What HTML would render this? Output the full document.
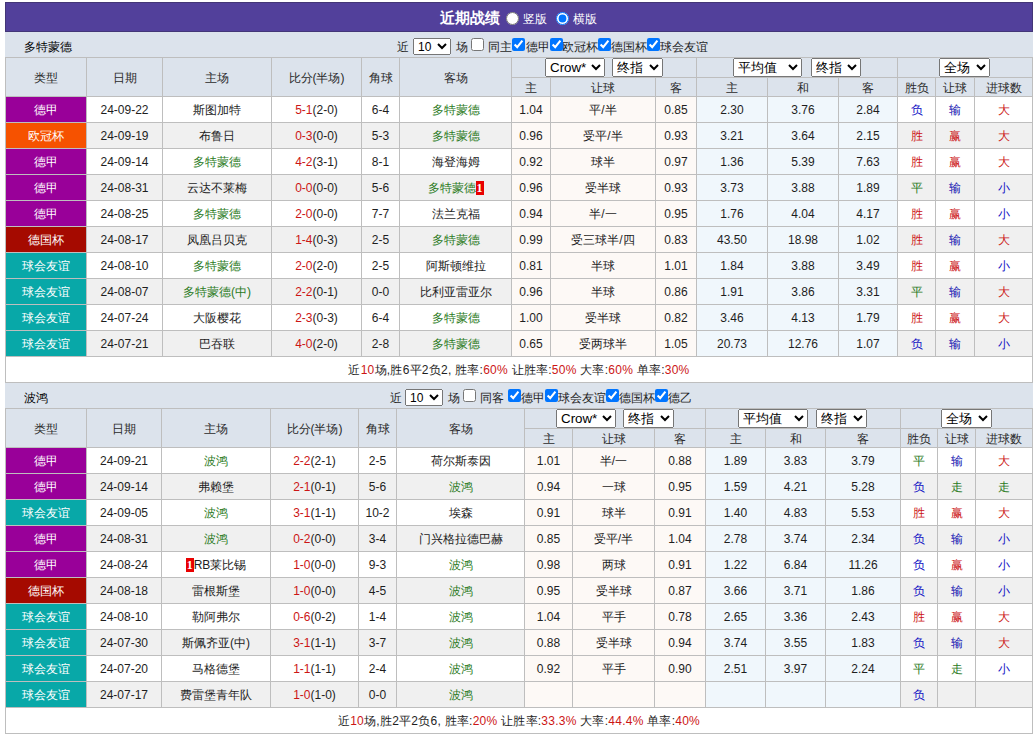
<!DOCTYPE html>
<html><head><meta charset="utf-8"><title>近期战绩</title>
<style>
html,body{margin:0;padding:0;background:#fff;width:1035px;height:738px;overflow:hidden;position:relative}
body{font-family:"Liberation Sans",sans-serif;font-size:12px;font-weight:500;color:#1e1e1e}
.r{position:absolute}
.t{position:absolute;text-align:center;white-space:nowrap;overflow:hidden}
.flt{position:absolute;height:21px;line-height:21px;white-space:nowrap}
.fs{position:absolute;z-index:2;height:17px;width:38px;margin-top:1px;box-sizing:border-box;font-size:12px}
.cb{position:absolute;z-index:2;margin:1px 0 0 0;width:13px;height:13px}
.hs{position:absolute;z-index:2;height:19px;box-sizing:border-box;font-size:13.33px}
.rc{background:#e80000;color:#fff;font-weight:bold;padding:0 1px;font-family:"Liberation Serif",serif}
#title{position:absolute;left:5px;top:2px;width:1028px;height:30px;box-sizing:border-box;border:1px solid #433677;background:#52409b;color:#fff;text-align:center;line-height:28px}
.tt{position:absolute;color:#fff;line-height:30px;white-space:nowrap}
input{margin:0}
select{font-family:"Liberation Sans",sans-serif}
</style></head><body>
<div id="title"></div>
<div class="tt" style="left:440px;top:3px;font-size:15px;font-weight:900">近期战绩</div>
<input type="radio" name="v" style="position:absolute;left:506px;top:12px;margin:0">
<div class="tt" style="left:523px;top:4px">竖版</div>
<input type="radio" name="v" checked style="position:absolute;left:556px;top:12px;margin:0">
<div class="tt" style="left:573px;top:4px">横版</div>
<div class="r" style="left:5px;top:32px;width:1028px;height:25px;background:#dce3ec;"></div><div class="t" style="left:24px;top:37px;width:100px;height:21px;line-height:21px;text-align:left;color:#000;">多特蒙德</div><div class="flt" style="top:37px;left:397px">近</div><select class="fs" style="top:37px;left:413px"><option>10</option></select><div class="flt" style="top:37px;left:456px">场</div><input type="checkbox" class="cb" style="top:37px;left:471px"><div class="flt" style="top:37px;left:488px">同主</div><input type="checkbox" class="cb" style="top:37px;left:512px" checked><div class="flt" style="top:37px;left:526px">德甲</div><input type="checkbox" class="cb" style="top:37px;left:550px" checked><div class="flt" style="top:37px;left:562px">欧冠杯</div><input type="checkbox" class="cb" style="top:37px;left:598px" checked><div class="flt" style="top:37px;left:611px">德国杯</div><input type="checkbox" class="cb" style="top:37px;left:647px" checked><div class="flt" style="top:37px;left:660px">球会友谊</div><select class="hs" style="left:545px;top:58px;width:60px"><option>Crow*</option></select><select class="hs" style="left:612px;top:58px;width:51px"><option>终指</option></select><select class="hs" style="left:733px;top:58px;width:69px"><option>平均值</option></select><select class="hs" style="left:811px;top:58px;width:50px"><option>终指</option></select><select class="hs" style="left:939px;top:58px;width:51px"><option>全场</option></select><div class="r" style="left:5px;top:57px;width:1028px;height:39px;background:#dce3ec;"></div><div class="r" style="left:5px;top:96px;width:1028px;height:26px;background:#ffffff;"></div><div class="r" style="left:511px;top:96px;width:185px;height:26px;background:#fdf9f6;"></div><div class="r" style="left:696px;top:96px;width:201px;height:26px;background:#f0f7fc;"></div><div class="r" style="left:5px;top:96px;width:81px;height:26px;background:#990099;"></div><div class="r" style="left:5px;top:122px;width:1028px;height:26px;background:#f0f0f0;"></div><div class="r" style="left:511px;top:122px;width:185px;height:26px;background:#fdf9f6;"></div><div class="r" style="left:696px;top:122px;width:201px;height:26px;background:#f0f7fc;"></div><div class="r" style="left:5px;top:122px;width:81px;height:26px;background:#f65200;"></div><div class="r" style="left:5px;top:148px;width:1028px;height:26px;background:#ffffff;"></div><div class="r" style="left:511px;top:148px;width:185px;height:26px;background:#fdf9f6;"></div><div class="r" style="left:696px;top:148px;width:201px;height:26px;background:#f0f7fc;"></div><div class="r" style="left:5px;top:148px;width:81px;height:26px;background:#990099;"></div><div class="r" style="left:5px;top:174px;width:1028px;height:26px;background:#f0f0f0;"></div><div class="r" style="left:511px;top:174px;width:185px;height:26px;background:#fdf9f6;"></div><div class="r" style="left:696px;top:174px;width:201px;height:26px;background:#f0f7fc;"></div><div class="r" style="left:5px;top:174px;width:81px;height:26px;background:#990099;"></div><div class="r" style="left:5px;top:200px;width:1028px;height:26px;background:#ffffff;"></div><div class="r" style="left:511px;top:200px;width:185px;height:26px;background:#fdf9f6;"></div><div class="r" style="left:696px;top:200px;width:201px;height:26px;background:#f0f7fc;"></div><div class="r" style="left:5px;top:200px;width:81px;height:26px;background:#990099;"></div><div class="r" style="left:5px;top:226px;width:1028px;height:26px;background:#f0f0f0;"></div><div class="r" style="left:511px;top:226px;width:185px;height:26px;background:#fdf9f6;"></div><div class="r" style="left:696px;top:226px;width:201px;height:26px;background:#f0f7fc;"></div><div class="r" style="left:5px;top:226px;width:81px;height:26px;background:#a50a00;"></div><div class="r" style="left:5px;top:252px;width:1028px;height:26px;background:#ffffff;"></div><div class="r" style="left:511px;top:252px;width:185px;height:26px;background:#fdf9f6;"></div><div class="r" style="left:696px;top:252px;width:201px;height:26px;background:#f0f7fc;"></div><div class="r" style="left:5px;top:252px;width:81px;height:26px;background:#08a8a8;"></div><div class="r" style="left:5px;top:278px;width:1028px;height:26px;background:#f0f0f0;"></div><div class="r" style="left:511px;top:278px;width:185px;height:26px;background:#fdf9f6;"></div><div class="r" style="left:696px;top:278px;width:201px;height:26px;background:#f0f7fc;"></div><div class="r" style="left:5px;top:278px;width:81px;height:26px;background:#08a8a8;"></div><div class="r" style="left:5px;top:304px;width:1028px;height:26px;background:#ffffff;"></div><div class="r" style="left:511px;top:304px;width:185px;height:26px;background:#fdf9f6;"></div><div class="r" style="left:696px;top:304px;width:201px;height:26px;background:#f0f7fc;"></div><div class="r" style="left:5px;top:304px;width:81px;height:26px;background:#08a8a8;"></div><div class="r" style="left:5px;top:330px;width:1028px;height:26px;background:#f0f0f0;"></div><div class="r" style="left:511px;top:330px;width:185px;height:26px;background:#fdf9f6;"></div><div class="r" style="left:696px;top:330px;width:201px;height:26px;background:#f0f7fc;"></div><div class="r" style="left:5px;top:330px;width:81px;height:26px;background:#08a8a8;"></div><div class="r" style="left:5px;top:356px;width:1028px;height:26px;background:#ffffff;"></div><div class="r" style="left:5px;top:57px;width:1px;height:299px;background:#bebebe;"></div><div class="r" style="left:86px;top:57px;width:1px;height:299px;background:#bebebe;"></div><div class="r" style="left:162px;top:57px;width:1px;height:299px;background:#bebebe;"></div><div class="r" style="left:271px;top:57px;width:1px;height:299px;background:#bebebe;"></div><div class="r" style="left:361px;top:57px;width:1px;height:299px;background:#bebebe;"></div><div class="r" style="left:399px;top:57px;width:1px;height:299px;background:#bebebe;"></div><div class="r" style="left:511px;top:57px;width:1px;height:299px;background:#bebebe;"></div><div class="r" style="left:550px;top:57px;width:1px;height:299px;background:#bebebe;"></div><div class="r" style="left:655px;top:57px;width:1px;height:299px;background:#bebebe;"></div><div class="r" style="left:696px;top:57px;width:1px;height:299px;background:#bebebe;"></div><div class="r" style="left:767px;top:57px;width:1px;height:299px;background:#bebebe;"></div><div class="r" style="left:838px;top:57px;width:1px;height:299px;background:#bebebe;"></div><div class="r" style="left:897px;top:57px;width:1px;height:299px;background:#bebebe;"></div><div class="r" style="left:935px;top:57px;width:1px;height:299px;background:#bebebe;"></div><div class="r" style="left:974px;top:57px;width:1px;height:299px;background:#bebebe;"></div><div class="r" style="left:1032px;top:57px;width:1px;height:299px;background:#bebebe;"></div><div class="r" style="left:5px;top:356px;width:1px;height:26px;background:#bebebe;"></div><div class="r" style="left:1032px;top:356px;width:1px;height:26px;background:#bebebe;"></div><div class="r" style="left:5px;top:96px;width:1028px;height:1px;background:#bebebe;"></div><div class="r" style="left:5px;top:122px;width:1028px;height:1px;background:#bebebe;"></div><div class="r" style="left:5px;top:148px;width:1028px;height:1px;background:#bebebe;"></div><div class="r" style="left:5px;top:174px;width:1028px;height:1px;background:#bebebe;"></div><div class="r" style="left:5px;top:200px;width:1028px;height:1px;background:#bebebe;"></div><div class="r" style="left:5px;top:226px;width:1028px;height:1px;background:#bebebe;"></div><div class="r" style="left:5px;top:252px;width:1028px;height:1px;background:#bebebe;"></div><div class="r" style="left:5px;top:278px;width:1028px;height:1px;background:#bebebe;"></div><div class="r" style="left:5px;top:304px;width:1028px;height:1px;background:#bebebe;"></div><div class="r" style="left:5px;top:330px;width:1028px;height:1px;background:#bebebe;"></div><div class="r" style="left:5px;top:356px;width:1028px;height:1px;background:#bebebe;"></div><div class="r" style="left:5px;top:382px;width:1028px;height:1px;background:#bebebe;"></div><div class="r" style="left:5px;top:57px;width:1028px;height:1px;background:#bebebe;"></div><div class="r" style="left:511px;top:77px;width:521px;height:1px;background:#bebebe;"></div><div class="r" style="left:512px;top:58px;width:184px;height:19px;background:#dce3ec;"></div><div class="r" style="left:697px;top:58px;width:200px;height:19px;background:#dce3ec;"></div><div class="r" style="left:898px;top:58px;width:134px;height:19px;background:#dce3ec;"></div><div class="t" style="left:6px;top:59px;width:80px;height:38px;line-height:38px;color:#2a2a2a;">类型</div><div class="t" style="left:87px;top:59px;width:75px;height:38px;line-height:38px;color:#2a2a2a;">日期</div><div class="t" style="left:163px;top:59px;width:108px;height:38px;line-height:38px;color:#2a2a2a;">主场</div><div class="t" style="left:272px;top:59px;width:89px;height:38px;line-height:38px;color:#2a2a2a;">比分(半场)</div><div class="t" style="left:362px;top:59px;width:37px;height:38px;line-height:38px;color:#2a2a2a;">角球</div><div class="t" style="left:400px;top:59px;width:111px;height:38px;line-height:38px;color:#2a2a2a;">客场</div><div class="t" style="left:512px;top:79px;width:38px;height:18px;line-height:18px;color:#2a2a2a;">主</div><div class="t" style="left:551px;top:79px;width:104px;height:18px;line-height:18px;color:#2a2a2a;">让球</div><div class="t" style="left:656px;top:79px;width:40px;height:18px;line-height:18px;color:#2a2a2a;">客</div><div class="t" style="left:697px;top:79px;width:70px;height:18px;line-height:18px;color:#2a2a2a;">主</div><div class="t" style="left:768px;top:79px;width:70px;height:18px;line-height:18px;color:#2a2a2a;">和</div><div class="t" style="left:839px;top:79px;width:58px;height:18px;line-height:18px;color:#2a2a2a;">客</div><div class="t" style="left:898px;top:79px;width:37px;height:18px;line-height:18px;color:#2a2a2a;">胜负</div><div class="t" style="left:936px;top:79px;width:38px;height:18px;line-height:18px;color:#2a2a2a;">让球</div><div class="t" style="left:975px;top:79px;width:57px;height:18px;line-height:18px;color:#2a2a2a;">进球数</div><div class="t" style="left:6px;top:98px;width:80px;height:25px;line-height:25px;color:#ffffff;">德甲</div><div class="t" style="left:87px;top:98px;width:75px;height:25px;line-height:25px;color:#1e1e1e;">24-09-22</div><div class="t" style="left:163px;top:98px;width:108px;height:25px;line-height:25px;color:#1e1e1e;">斯图加特</div><div class="t" style="left:272px;top:98px;width:89px;height:25px;line-height:25px;color:#1e1e1e;"><span style="color:#cc1515">5-1</span>(2-0)</div><div class="t" style="left:362px;top:98px;width:37px;height:25px;line-height:25px;color:#1e1e1e;">6-4</div><div class="t" style="left:400px;top:98px;width:111px;height:25px;line-height:25px;color:#2a7a22;">多特蒙德</div><div class="t" style="left:512px;top:98px;width:38px;height:25px;line-height:25px;color:#1e1e1e;">1.04</div><div class="t" style="left:551px;top:98px;width:104px;height:25px;line-height:25px;color:#1e1e1e;">平/半</div><div class="t" style="left:656px;top:98px;width:40px;height:25px;line-height:25px;color:#1e1e1e;">0.85</div><div class="t" style="left:697px;top:98px;width:70px;height:25px;line-height:25px;color:#1e1e1e;">2.30</div><div class="t" style="left:768px;top:98px;width:70px;height:25px;line-height:25px;color:#1e1e1e;">3.76</div><div class="t" style="left:839px;top:98px;width:58px;height:25px;line-height:25px;color:#1e1e1e;">2.84</div><div class="t" style="left:898px;top:98px;width:37px;height:25px;line-height:25px;color:#1010c4;">负</div><div class="t" style="left:936px;top:98px;width:38px;height:25px;line-height:25px;color:#1010b0;">输</div><div class="t" style="left:975px;top:98px;width:57px;height:25px;line-height:25px;color:#cc1515;">大</div><div class="t" style="left:6px;top:124px;width:80px;height:25px;line-height:25px;color:#ffffff;">欧冠杯</div><div class="t" style="left:87px;top:124px;width:75px;height:25px;line-height:25px;color:#1e1e1e;">24-09-19</div><div class="t" style="left:163px;top:124px;width:108px;height:25px;line-height:25px;color:#1e1e1e;">布鲁日</div><div class="t" style="left:272px;top:124px;width:89px;height:25px;line-height:25px;color:#1e1e1e;"><span style="color:#cc1515">0-3</span>(0-0)</div><div class="t" style="left:362px;top:124px;width:37px;height:25px;line-height:25px;color:#1e1e1e;">5-3</div><div class="t" style="left:400px;top:124px;width:111px;height:25px;line-height:25px;color:#2a7a22;">多特蒙德</div><div class="t" style="left:512px;top:124px;width:38px;height:25px;line-height:25px;color:#1e1e1e;">0.96</div><div class="t" style="left:551px;top:124px;width:104px;height:25px;line-height:25px;color:#1e1e1e;">受平/半</div><div class="t" style="left:656px;top:124px;width:40px;height:25px;line-height:25px;color:#1e1e1e;">0.93</div><div class="t" style="left:697px;top:124px;width:70px;height:25px;line-height:25px;color:#1e1e1e;">3.21</div><div class="t" style="left:768px;top:124px;width:70px;height:25px;line-height:25px;color:#1e1e1e;">3.64</div><div class="t" style="left:839px;top:124px;width:58px;height:25px;line-height:25px;color:#1e1e1e;">2.15</div><div class="t" style="left:898px;top:124px;width:37px;height:25px;line-height:25px;color:#cc1515;">胜</div><div class="t" style="left:936px;top:124px;width:38px;height:25px;line-height:25px;color:#cc1515;">赢</div><div class="t" style="left:975px;top:124px;width:57px;height:25px;line-height:25px;color:#cc1515;">大</div><div class="t" style="left:6px;top:150px;width:80px;height:25px;line-height:25px;color:#ffffff;">德甲</div><div class="t" style="left:87px;top:150px;width:75px;height:25px;line-height:25px;color:#1e1e1e;">24-09-14</div><div class="t" style="left:163px;top:150px;width:108px;height:25px;line-height:25px;color:#2a7a22;">多特蒙德</div><div class="t" style="left:272px;top:150px;width:89px;height:25px;line-height:25px;color:#1e1e1e;"><span style="color:#cc1515">4-2</span>(3-1)</div><div class="t" style="left:362px;top:150px;width:37px;height:25px;line-height:25px;color:#1e1e1e;">8-1</div><div class="t" style="left:400px;top:150px;width:111px;height:25px;line-height:25px;color:#1e1e1e;">海登海姆</div><div class="t" style="left:512px;top:150px;width:38px;height:25px;line-height:25px;color:#1e1e1e;">0.92</div><div class="t" style="left:551px;top:150px;width:104px;height:25px;line-height:25px;color:#1e1e1e;">球半</div><div class="t" style="left:656px;top:150px;width:40px;height:25px;line-height:25px;color:#1e1e1e;">0.97</div><div class="t" style="left:697px;top:150px;width:70px;height:25px;line-height:25px;color:#1e1e1e;">1.36</div><div class="t" style="left:768px;top:150px;width:70px;height:25px;line-height:25px;color:#1e1e1e;">5.39</div><div class="t" style="left:839px;top:150px;width:58px;height:25px;line-height:25px;color:#1e1e1e;">7.63</div><div class="t" style="left:898px;top:150px;width:37px;height:25px;line-height:25px;color:#cc1515;">胜</div><div class="t" style="left:936px;top:150px;width:38px;height:25px;line-height:25px;color:#cc1515;">赢</div><div class="t" style="left:975px;top:150px;width:57px;height:25px;line-height:25px;color:#cc1515;">大</div><div class="t" style="left:6px;top:176px;width:80px;height:25px;line-height:25px;color:#ffffff;">德甲</div><div class="t" style="left:87px;top:176px;width:75px;height:25px;line-height:25px;color:#1e1e1e;">24-08-31</div><div class="t" style="left:163px;top:176px;width:108px;height:25px;line-height:25px;color:#1e1e1e;">云达不莱梅</div><div class="t" style="left:272px;top:176px;width:89px;height:25px;line-height:25px;color:#1e1e1e;"><span style="color:#cc1515">0-0</span>(0-0)</div><div class="t" style="left:362px;top:176px;width:37px;height:25px;line-height:25px;color:#1e1e1e;">5-6</div><div class="t" style="left:400px;top:176px;width:111px;height:25px;line-height:25px;color:#2a7a22;">多特蒙德<span class="rc">1</span></div><div class="t" style="left:512px;top:176px;width:38px;height:25px;line-height:25px;color:#1e1e1e;">0.96</div><div class="t" style="left:551px;top:176px;width:104px;height:25px;line-height:25px;color:#1e1e1e;">受半球</div><div class="t" style="left:656px;top:176px;width:40px;height:25px;line-height:25px;color:#1e1e1e;">0.93</div><div class="t" style="left:697px;top:176px;width:70px;height:25px;line-height:25px;color:#1e1e1e;">3.73</div><div class="t" style="left:768px;top:176px;width:70px;height:25px;line-height:25px;color:#1e1e1e;">3.88</div><div class="t" style="left:839px;top:176px;width:58px;height:25px;line-height:25px;color:#1e1e1e;">1.89</div><div class="t" style="left:898px;top:176px;width:37px;height:25px;line-height:25px;color:#2a7a22;">平</div><div class="t" style="left:936px;top:176px;width:38px;height:25px;line-height:25px;color:#1010b0;">输</div><div class="t" style="left:975px;top:176px;width:57px;height:25px;line-height:25px;color:#1010c4;">小</div><div class="t" style="left:6px;top:202px;width:80px;height:25px;line-height:25px;color:#ffffff;">德甲</div><div class="t" style="left:87px;top:202px;width:75px;height:25px;line-height:25px;color:#1e1e1e;">24-08-25</div><div class="t" style="left:163px;top:202px;width:108px;height:25px;line-height:25px;color:#2a7a22;">多特蒙德</div><div class="t" style="left:272px;top:202px;width:89px;height:25px;line-height:25px;color:#1e1e1e;"><span style="color:#cc1515">2-0</span>(0-0)</div><div class="t" style="left:362px;top:202px;width:37px;height:25px;line-height:25px;color:#1e1e1e;">7-7</div><div class="t" style="left:400px;top:202px;width:111px;height:25px;line-height:25px;color:#1e1e1e;">法兰克福</div><div class="t" style="left:512px;top:202px;width:38px;height:25px;line-height:25px;color:#1e1e1e;">0.94</div><div class="t" style="left:551px;top:202px;width:104px;height:25px;line-height:25px;color:#1e1e1e;">半/一</div><div class="t" style="left:656px;top:202px;width:40px;height:25px;line-height:25px;color:#1e1e1e;">0.95</div><div class="t" style="left:697px;top:202px;width:70px;height:25px;line-height:25px;color:#1e1e1e;">1.76</div><div class="t" style="left:768px;top:202px;width:70px;height:25px;line-height:25px;color:#1e1e1e;">4.04</div><div class="t" style="left:839px;top:202px;width:58px;height:25px;line-height:25px;color:#1e1e1e;">4.17</div><div class="t" style="left:898px;top:202px;width:37px;height:25px;line-height:25px;color:#cc1515;">胜</div><div class="t" style="left:936px;top:202px;width:38px;height:25px;line-height:25px;color:#cc1515;">赢</div><div class="t" style="left:975px;top:202px;width:57px;height:25px;line-height:25px;color:#1010c4;">小</div><div class="t" style="left:6px;top:228px;width:80px;height:25px;line-height:25px;color:#ffffff;">德国杯</div><div class="t" style="left:87px;top:228px;width:75px;height:25px;line-height:25px;color:#1e1e1e;">24-08-17</div><div class="t" style="left:163px;top:228px;width:108px;height:25px;line-height:25px;color:#1e1e1e;">凤凰吕贝克</div><div class="t" style="left:272px;top:228px;width:89px;height:25px;line-height:25px;color:#1e1e1e;"><span style="color:#cc1515">1-4</span>(0-3)</div><div class="t" style="left:362px;top:228px;width:37px;height:25px;line-height:25px;color:#1e1e1e;">2-5</div><div class="t" style="left:400px;top:228px;width:111px;height:25px;line-height:25px;color:#2a7a22;">多特蒙德</div><div class="t" style="left:512px;top:228px;width:38px;height:25px;line-height:25px;color:#1e1e1e;">0.99</div><div class="t" style="left:551px;top:228px;width:104px;height:25px;line-height:25px;color:#1e1e1e;">受三球半/四</div><div class="t" style="left:656px;top:228px;width:40px;height:25px;line-height:25px;color:#1e1e1e;">0.83</div><div class="t" style="left:697px;top:228px;width:70px;height:25px;line-height:25px;color:#1e1e1e;">43.50</div><div class="t" style="left:768px;top:228px;width:70px;height:25px;line-height:25px;color:#1e1e1e;">18.98</div><div class="t" style="left:839px;top:228px;width:58px;height:25px;line-height:25px;color:#1e1e1e;">1.02</div><div class="t" style="left:898px;top:228px;width:37px;height:25px;line-height:25px;color:#cc1515;">胜</div><div class="t" style="left:936px;top:228px;width:38px;height:25px;line-height:25px;color:#1010b0;">输</div><div class="t" style="left:975px;top:228px;width:57px;height:25px;line-height:25px;color:#cc1515;">大</div><div class="t" style="left:6px;top:254px;width:80px;height:25px;line-height:25px;color:#ffffff;">球会友谊</div><div class="t" style="left:87px;top:254px;width:75px;height:25px;line-height:25px;color:#1e1e1e;">24-08-10</div><div class="t" style="left:163px;top:254px;width:108px;height:25px;line-height:25px;color:#2a7a22;">多特蒙德</div><div class="t" style="left:272px;top:254px;width:89px;height:25px;line-height:25px;color:#1e1e1e;"><span style="color:#cc1515">2-0</span>(2-0)</div><div class="t" style="left:362px;top:254px;width:37px;height:25px;line-height:25px;color:#1e1e1e;">2-5</div><div class="t" style="left:400px;top:254px;width:111px;height:25px;line-height:25px;color:#1e1e1e;">阿斯顿维拉</div><div class="t" style="left:512px;top:254px;width:38px;height:25px;line-height:25px;color:#1e1e1e;">0.81</div><div class="t" style="left:551px;top:254px;width:104px;height:25px;line-height:25px;color:#1e1e1e;">半球</div><div class="t" style="left:656px;top:254px;width:40px;height:25px;line-height:25px;color:#1e1e1e;">1.01</div><div class="t" style="left:697px;top:254px;width:70px;height:25px;line-height:25px;color:#1e1e1e;">1.84</div><div class="t" style="left:768px;top:254px;width:70px;height:25px;line-height:25px;color:#1e1e1e;">3.88</div><div class="t" style="left:839px;top:254px;width:58px;height:25px;line-height:25px;color:#1e1e1e;">3.49</div><div class="t" style="left:898px;top:254px;width:37px;height:25px;line-height:25px;color:#cc1515;">胜</div><div class="t" style="left:936px;top:254px;width:38px;height:25px;line-height:25px;color:#cc1515;">赢</div><div class="t" style="left:975px;top:254px;width:57px;height:25px;line-height:25px;color:#1010c4;">小</div><div class="t" style="left:6px;top:280px;width:80px;height:25px;line-height:25px;color:#ffffff;">球会友谊</div><div class="t" style="left:87px;top:280px;width:75px;height:25px;line-height:25px;color:#1e1e1e;">24-08-07</div><div class="t" style="left:163px;top:280px;width:108px;height:25px;line-height:25px;color:#2a7a22;">多特蒙德(中)</div><div class="t" style="left:272px;top:280px;width:89px;height:25px;line-height:25px;color:#1e1e1e;"><span style="color:#cc1515">2-2</span>(0-1)</div><div class="t" style="left:362px;top:280px;width:37px;height:25px;line-height:25px;color:#1e1e1e;">0-0</div><div class="t" style="left:400px;top:280px;width:111px;height:25px;line-height:25px;color:#1e1e1e;">比利亚雷亚尔</div><div class="t" style="left:512px;top:280px;width:38px;height:25px;line-height:25px;color:#1e1e1e;">0.96</div><div class="t" style="left:551px;top:280px;width:104px;height:25px;line-height:25px;color:#1e1e1e;">半球</div><div class="t" style="left:656px;top:280px;width:40px;height:25px;line-height:25px;color:#1e1e1e;">0.86</div><div class="t" style="left:697px;top:280px;width:70px;height:25px;line-height:25px;color:#1e1e1e;">1.91</div><div class="t" style="left:768px;top:280px;width:70px;height:25px;line-height:25px;color:#1e1e1e;">3.86</div><div class="t" style="left:839px;top:280px;width:58px;height:25px;line-height:25px;color:#1e1e1e;">3.31</div><div class="t" style="left:898px;top:280px;width:37px;height:25px;line-height:25px;color:#2a7a22;">平</div><div class="t" style="left:936px;top:280px;width:38px;height:25px;line-height:25px;color:#1010b0;">输</div><div class="t" style="left:975px;top:280px;width:57px;height:25px;line-height:25px;color:#cc1515;">大</div><div class="t" style="left:6px;top:306px;width:80px;height:25px;line-height:25px;color:#ffffff;">球会友谊</div><div class="t" style="left:87px;top:306px;width:75px;height:25px;line-height:25px;color:#1e1e1e;">24-07-24</div><div class="t" style="left:163px;top:306px;width:108px;height:25px;line-height:25px;color:#1e1e1e;">大阪樱花</div><div class="t" style="left:272px;top:306px;width:89px;height:25px;line-height:25px;color:#1e1e1e;"><span style="color:#cc1515">2-3</span>(0-3)</div><div class="t" style="left:362px;top:306px;width:37px;height:25px;line-height:25px;color:#1e1e1e;">6-4</div><div class="t" style="left:400px;top:306px;width:111px;height:25px;line-height:25px;color:#2a7a22;">多特蒙德</div><div class="t" style="left:512px;top:306px;width:38px;height:25px;line-height:25px;color:#1e1e1e;">1.00</div><div class="t" style="left:551px;top:306px;width:104px;height:25px;line-height:25px;color:#1e1e1e;">受半球</div><div class="t" style="left:656px;top:306px;width:40px;height:25px;line-height:25px;color:#1e1e1e;">0.82</div><div class="t" style="left:697px;top:306px;width:70px;height:25px;line-height:25px;color:#1e1e1e;">3.46</div><div class="t" style="left:768px;top:306px;width:70px;height:25px;line-height:25px;color:#1e1e1e;">4.13</div><div class="t" style="left:839px;top:306px;width:58px;height:25px;line-height:25px;color:#1e1e1e;">1.79</div><div class="t" style="left:898px;top:306px;width:37px;height:25px;line-height:25px;color:#cc1515;">胜</div><div class="t" style="left:936px;top:306px;width:38px;height:25px;line-height:25px;color:#cc1515;">赢</div><div class="t" style="left:975px;top:306px;width:57px;height:25px;line-height:25px;color:#cc1515;">大</div><div class="t" style="left:6px;top:332px;width:80px;height:25px;line-height:25px;color:#ffffff;">球会友谊</div><div class="t" style="left:87px;top:332px;width:75px;height:25px;line-height:25px;color:#1e1e1e;">24-07-21</div><div class="t" style="left:163px;top:332px;width:108px;height:25px;line-height:25px;color:#1e1e1e;">巴吞联</div><div class="t" style="left:272px;top:332px;width:89px;height:25px;line-height:25px;color:#1e1e1e;"><span style="color:#cc1515">4-0</span>(2-0)</div><div class="t" style="left:362px;top:332px;width:37px;height:25px;line-height:25px;color:#1e1e1e;">2-8</div><div class="t" style="left:400px;top:332px;width:111px;height:25px;line-height:25px;color:#2a7a22;">多特蒙德</div><div class="t" style="left:512px;top:332px;width:38px;height:25px;line-height:25px;color:#1e1e1e;">0.65</div><div class="t" style="left:551px;top:332px;width:104px;height:25px;line-height:25px;color:#1e1e1e;">受两球半</div><div class="t" style="left:656px;top:332px;width:40px;height:25px;line-height:25px;color:#1e1e1e;">1.05</div><div class="t" style="left:697px;top:332px;width:70px;height:25px;line-height:25px;color:#1e1e1e;">20.73</div><div class="t" style="left:768px;top:332px;width:70px;height:25px;line-height:25px;color:#1e1e1e;">12.76</div><div class="t" style="left:839px;top:332px;width:58px;height:25px;line-height:25px;color:#1e1e1e;">1.07</div><div class="t" style="left:898px;top:332px;width:37px;height:25px;line-height:25px;color:#1010c4;">负</div><div class="t" style="left:936px;top:332px;width:38px;height:25px;line-height:25px;color:#1010b0;">输</div><div class="t" style="left:975px;top:332px;width:57px;height:25px;line-height:25px;color:#1010c4;">小</div><div class="t" style="left:5px;top:358px;width:1028px;height:25px;line-height:25px;color:#1e1e1e;letter-spacing:0.25px;">近<span style="color:#cc1515">10</span>场,胜6平2负2, 胜率:<span style="color:#cc1515">60%</span> 让胜率:<span style="color:#cc1515">50%</span> 大率:<span style="color:#cc1515">60%</span> 单率:<span style="color:#cc1515">30%</span></div><div class="r" style="left:5px;top:383px;width:1028px;height:25px;background:#dce3ec;"></div><div class="t" style="left:24px;top:388px;width:100px;height:21px;line-height:21px;text-align:left;color:#000;">波鸿</div><div class="flt" style="top:388px;left:390px">近</div><select class="fs" style="top:388px;left:405px"><option>10</option></select><div class="flt" style="top:388px;left:448px">场</div><input type="checkbox" class="cb" style="top:388px;left:463px"><div class="flt" style="top:388px;left:480px">同客</div><input type="checkbox" class="cb" style="top:388px;left:508px" checked><div class="flt" style="top:388px;left:521px">德甲</div><input type="checkbox" class="cb" style="top:388px;left:545px" checked><div class="flt" style="top:388px;left:558px">球会友谊</div><input type="checkbox" class="cb" style="top:388px;left:606px" checked><div class="flt" style="top:388px;left:619px">德国杯</div><input type="checkbox" class="cb" style="top:388px;left:655px" checked><div class="flt" style="top:388px;left:668px">德乙</div><select class="hs" style="left:556px;top:409px;width:60px"><option>Crow*</option></select><select class="hs" style="left:623px;top:409px;width:51px"><option>终指</option></select><select class="hs" style="left:738px;top:409px;width:70px"><option>平均值</option></select><select class="hs" style="left:816px;top:409px;width:51px"><option>终指</option></select><select class="hs" style="left:941px;top:409px;width:51px"><option>全场</option></select><div class="r" style="left:5px;top:408px;width:1028px;height:39px;background:#dce3ec;"></div><div class="r" style="left:5px;top:447px;width:1028px;height:26px;background:#ffffff;"></div><div class="r" style="left:524px;top:447px;width:181px;height:26px;background:#fdf9f6;"></div><div class="r" style="left:705px;top:447px;width:195px;height:26px;background:#f0f7fc;"></div><div class="r" style="left:5px;top:447px;width:81px;height:26px;background:#990099;"></div><div class="r" style="left:5px;top:473px;width:1028px;height:26px;background:#f0f0f0;"></div><div class="r" style="left:524px;top:473px;width:181px;height:26px;background:#fdf9f6;"></div><div class="r" style="left:705px;top:473px;width:195px;height:26px;background:#f0f7fc;"></div><div class="r" style="left:5px;top:473px;width:81px;height:26px;background:#990099;"></div><div class="r" style="left:5px;top:499px;width:1028px;height:26px;background:#ffffff;"></div><div class="r" style="left:524px;top:499px;width:181px;height:26px;background:#fdf9f6;"></div><div class="r" style="left:705px;top:499px;width:195px;height:26px;background:#f0f7fc;"></div><div class="r" style="left:5px;top:499px;width:81px;height:26px;background:#08a8a8;"></div><div class="r" style="left:5px;top:525px;width:1028px;height:26px;background:#f0f0f0;"></div><div class="r" style="left:524px;top:525px;width:181px;height:26px;background:#fdf9f6;"></div><div class="r" style="left:705px;top:525px;width:195px;height:26px;background:#f0f7fc;"></div><div class="r" style="left:5px;top:525px;width:81px;height:26px;background:#990099;"></div><div class="r" style="left:5px;top:551px;width:1028px;height:26px;background:#ffffff;"></div><div class="r" style="left:524px;top:551px;width:181px;height:26px;background:#fdf9f6;"></div><div class="r" style="left:705px;top:551px;width:195px;height:26px;background:#f0f7fc;"></div><div class="r" style="left:5px;top:551px;width:81px;height:26px;background:#990099;"></div><div class="r" style="left:5px;top:577px;width:1028px;height:26px;background:#f0f0f0;"></div><div class="r" style="left:524px;top:577px;width:181px;height:26px;background:#fdf9f6;"></div><div class="r" style="left:705px;top:577px;width:195px;height:26px;background:#f0f7fc;"></div><div class="r" style="left:5px;top:577px;width:81px;height:26px;background:#a50a00;"></div><div class="r" style="left:5px;top:603px;width:1028px;height:26px;background:#ffffff;"></div><div class="r" style="left:524px;top:603px;width:181px;height:26px;background:#fdf9f6;"></div><div class="r" style="left:705px;top:603px;width:195px;height:26px;background:#f0f7fc;"></div><div class="r" style="left:5px;top:603px;width:81px;height:26px;background:#08a8a8;"></div><div class="r" style="left:5px;top:629px;width:1028px;height:26px;background:#f0f0f0;"></div><div class="r" style="left:524px;top:629px;width:181px;height:26px;background:#fdf9f6;"></div><div class="r" style="left:705px;top:629px;width:195px;height:26px;background:#f0f7fc;"></div><div class="r" style="left:5px;top:629px;width:81px;height:26px;background:#08a8a8;"></div><div class="r" style="left:5px;top:655px;width:1028px;height:26px;background:#ffffff;"></div><div class="r" style="left:524px;top:655px;width:181px;height:26px;background:#fdf9f6;"></div><div class="r" style="left:705px;top:655px;width:195px;height:26px;background:#f0f7fc;"></div><div class="r" style="left:5px;top:655px;width:81px;height:26px;background:#08a8a8;"></div><div class="r" style="left:5px;top:681px;width:1028px;height:26px;background:#f0f0f0;"></div><div class="r" style="left:524px;top:681px;width:181px;height:26px;background:#fdf9f6;"></div><div class="r" style="left:705px;top:681px;width:195px;height:26px;background:#f0f7fc;"></div><div class="r" style="left:5px;top:681px;width:81px;height:26px;background:#08a8a8;"></div><div class="r" style="left:5px;top:707px;width:1028px;height:26px;background:#ffffff;"></div><div class="r" style="left:5px;top:408px;width:1px;height:299px;background:#bebebe;"></div><div class="r" style="left:86px;top:408px;width:1px;height:299px;background:#bebebe;"></div><div class="r" style="left:161px;top:408px;width:1px;height:299px;background:#bebebe;"></div><div class="r" style="left:270px;top:408px;width:1px;height:299px;background:#bebebe;"></div><div class="r" style="left:358px;top:408px;width:1px;height:299px;background:#bebebe;"></div><div class="r" style="left:396px;top:408px;width:1px;height:299px;background:#bebebe;"></div><div class="r" style="left:524px;top:408px;width:1px;height:299px;background:#bebebe;"></div><div class="r" style="left:572px;top:408px;width:1px;height:299px;background:#bebebe;"></div><div class="r" style="left:654px;top:408px;width:1px;height:299px;background:#bebebe;"></div><div class="r" style="left:705px;top:408px;width:1px;height:299px;background:#bebebe;"></div><div class="r" style="left:765px;top:408px;width:1px;height:299px;background:#bebebe;"></div><div class="r" style="left:825px;top:408px;width:1px;height:299px;background:#bebebe;"></div><div class="r" style="left:900px;top:408px;width:1px;height:299px;background:#bebebe;"></div><div class="r" style="left:937px;top:408px;width:1px;height:299px;background:#bebebe;"></div><div class="r" style="left:975px;top:408px;width:1px;height:299px;background:#bebebe;"></div><div class="r" style="left:1032px;top:408px;width:1px;height:299px;background:#bebebe;"></div><div class="r" style="left:5px;top:707px;width:1px;height:26px;background:#bebebe;"></div><div class="r" style="left:1032px;top:707px;width:1px;height:26px;background:#bebebe;"></div><div class="r" style="left:5px;top:447px;width:1028px;height:1px;background:#bebebe;"></div><div class="r" style="left:5px;top:473px;width:1028px;height:1px;background:#bebebe;"></div><div class="r" style="left:5px;top:499px;width:1028px;height:1px;background:#bebebe;"></div><div class="r" style="left:5px;top:525px;width:1028px;height:1px;background:#bebebe;"></div><div class="r" style="left:5px;top:551px;width:1028px;height:1px;background:#bebebe;"></div><div class="r" style="left:5px;top:577px;width:1028px;height:1px;background:#bebebe;"></div><div class="r" style="left:5px;top:603px;width:1028px;height:1px;background:#bebebe;"></div><div class="r" style="left:5px;top:629px;width:1028px;height:1px;background:#bebebe;"></div><div class="r" style="left:5px;top:655px;width:1028px;height:1px;background:#bebebe;"></div><div class="r" style="left:5px;top:681px;width:1028px;height:1px;background:#bebebe;"></div><div class="r" style="left:5px;top:707px;width:1028px;height:1px;background:#bebebe;"></div><div class="r" style="left:5px;top:733px;width:1028px;height:1px;background:#bebebe;"></div><div class="r" style="left:5px;top:408px;width:1028px;height:1px;background:#bebebe;"></div><div class="r" style="left:524px;top:428px;width:508px;height:1px;background:#bebebe;"></div><div class="r" style="left:525px;top:409px;width:180px;height:19px;background:#dce3ec;"></div><div class="r" style="left:706px;top:409px;width:194px;height:19px;background:#dce3ec;"></div><div class="r" style="left:901px;top:409px;width:131px;height:19px;background:#dce3ec;"></div><div class="t" style="left:6px;top:410px;width:80px;height:38px;line-height:38px;color:#2a2a2a;">类型</div><div class="t" style="left:87px;top:410px;width:74px;height:38px;line-height:38px;color:#2a2a2a;">日期</div><div class="t" style="left:162px;top:410px;width:108px;height:38px;line-height:38px;color:#2a2a2a;">主场</div><div class="t" style="left:271px;top:410px;width:87px;height:38px;line-height:38px;color:#2a2a2a;">比分(半场)</div><div class="t" style="left:359px;top:410px;width:37px;height:38px;line-height:38px;color:#2a2a2a;">角球</div><div class="t" style="left:397px;top:410px;width:127px;height:38px;line-height:38px;color:#2a2a2a;">客场</div><div class="t" style="left:525px;top:430px;width:47px;height:18px;line-height:18px;color:#2a2a2a;">主</div><div class="t" style="left:573px;top:430px;width:81px;height:18px;line-height:18px;color:#2a2a2a;">让球</div><div class="t" style="left:655px;top:430px;width:50px;height:18px;line-height:18px;color:#2a2a2a;">客</div><div class="t" style="left:706px;top:430px;width:59px;height:18px;line-height:18px;color:#2a2a2a;">主</div><div class="t" style="left:766px;top:430px;width:59px;height:18px;line-height:18px;color:#2a2a2a;">和</div><div class="t" style="left:826px;top:430px;width:74px;height:18px;line-height:18px;color:#2a2a2a;">客</div><div class="t" style="left:901px;top:430px;width:36px;height:18px;line-height:18px;color:#2a2a2a;">胜负</div><div class="t" style="left:938px;top:430px;width:37px;height:18px;line-height:18px;color:#2a2a2a;">让球</div><div class="t" style="left:976px;top:430px;width:56px;height:18px;line-height:18px;color:#2a2a2a;">进球数</div><div class="t" style="left:6px;top:449px;width:80px;height:25px;line-height:25px;color:#ffffff;">德甲</div><div class="t" style="left:87px;top:449px;width:74px;height:25px;line-height:25px;color:#1e1e1e;">24-09-21</div><div class="t" style="left:162px;top:449px;width:108px;height:25px;line-height:25px;color:#2a7a22;">波鸿</div><div class="t" style="left:271px;top:449px;width:87px;height:25px;line-height:25px;color:#1e1e1e;"><span style="color:#cc1515">2-2</span>(2-1)</div><div class="t" style="left:359px;top:449px;width:37px;height:25px;line-height:25px;color:#1e1e1e;">2-5</div><div class="t" style="left:397px;top:449px;width:127px;height:25px;line-height:25px;color:#1e1e1e;">荷尔斯泰因</div><div class="t" style="left:525px;top:449px;width:47px;height:25px;line-height:25px;color:#1e1e1e;">1.01</div><div class="t" style="left:573px;top:449px;width:81px;height:25px;line-height:25px;color:#1e1e1e;">半/一</div><div class="t" style="left:655px;top:449px;width:50px;height:25px;line-height:25px;color:#1e1e1e;">0.88</div><div class="t" style="left:706px;top:449px;width:59px;height:25px;line-height:25px;color:#1e1e1e;">1.89</div><div class="t" style="left:766px;top:449px;width:59px;height:25px;line-height:25px;color:#1e1e1e;">3.83</div><div class="t" style="left:826px;top:449px;width:74px;height:25px;line-height:25px;color:#1e1e1e;">3.79</div><div class="t" style="left:901px;top:449px;width:36px;height:25px;line-height:25px;color:#2a7a22;">平</div><div class="t" style="left:938px;top:449px;width:37px;height:25px;line-height:25px;color:#1010b0;">输</div><div class="t" style="left:976px;top:449px;width:56px;height:25px;line-height:25px;color:#cc1515;">大</div><div class="t" style="left:6px;top:475px;width:80px;height:25px;line-height:25px;color:#ffffff;">德甲</div><div class="t" style="left:87px;top:475px;width:74px;height:25px;line-height:25px;color:#1e1e1e;">24-09-14</div><div class="t" style="left:162px;top:475px;width:108px;height:25px;line-height:25px;color:#1e1e1e;">弗赖堡</div><div class="t" style="left:271px;top:475px;width:87px;height:25px;line-height:25px;color:#1e1e1e;"><span style="color:#cc1515">2-1</span>(0-1)</div><div class="t" style="left:359px;top:475px;width:37px;height:25px;line-height:25px;color:#1e1e1e;">5-6</div><div class="t" style="left:397px;top:475px;width:127px;height:25px;line-height:25px;color:#2a7a22;">波鸿</div><div class="t" style="left:525px;top:475px;width:47px;height:25px;line-height:25px;color:#1e1e1e;">0.94</div><div class="t" style="left:573px;top:475px;width:81px;height:25px;line-height:25px;color:#1e1e1e;">一球</div><div class="t" style="left:655px;top:475px;width:50px;height:25px;line-height:25px;color:#1e1e1e;">0.95</div><div class="t" style="left:706px;top:475px;width:59px;height:25px;line-height:25px;color:#1e1e1e;">1.59</div><div class="t" style="left:766px;top:475px;width:59px;height:25px;line-height:25px;color:#1e1e1e;">4.21</div><div class="t" style="left:826px;top:475px;width:74px;height:25px;line-height:25px;color:#1e1e1e;">5.28</div><div class="t" style="left:901px;top:475px;width:36px;height:25px;line-height:25px;color:#1010c4;">负</div><div class="t" style="left:938px;top:475px;width:37px;height:25px;line-height:25px;color:#2a7a22;">走</div><div class="t" style="left:976px;top:475px;width:56px;height:25px;line-height:25px;color:#2a7a22;">走</div><div class="t" style="left:6px;top:501px;width:80px;height:25px;line-height:25px;color:#ffffff;">球会友谊</div><div class="t" style="left:87px;top:501px;width:74px;height:25px;line-height:25px;color:#1e1e1e;">24-09-05</div><div class="t" style="left:162px;top:501px;width:108px;height:25px;line-height:25px;color:#2a7a22;">波鸿</div><div class="t" style="left:271px;top:501px;width:87px;height:25px;line-height:25px;color:#1e1e1e;"><span style="color:#cc1515">3-1</span>(1-1)</div><div class="t" style="left:359px;top:501px;width:37px;height:25px;line-height:25px;color:#1e1e1e;">10-2</div><div class="t" style="left:397px;top:501px;width:127px;height:25px;line-height:25px;color:#1e1e1e;">埃森</div><div class="t" style="left:525px;top:501px;width:47px;height:25px;line-height:25px;color:#1e1e1e;">0.91</div><div class="t" style="left:573px;top:501px;width:81px;height:25px;line-height:25px;color:#1e1e1e;">球半</div><div class="t" style="left:655px;top:501px;width:50px;height:25px;line-height:25px;color:#1e1e1e;">0.91</div><div class="t" style="left:706px;top:501px;width:59px;height:25px;line-height:25px;color:#1e1e1e;">1.40</div><div class="t" style="left:766px;top:501px;width:59px;height:25px;line-height:25px;color:#1e1e1e;">4.83</div><div class="t" style="left:826px;top:501px;width:74px;height:25px;line-height:25px;color:#1e1e1e;">5.53</div><div class="t" style="left:901px;top:501px;width:36px;height:25px;line-height:25px;color:#cc1515;">胜</div><div class="t" style="left:938px;top:501px;width:37px;height:25px;line-height:25px;color:#cc1515;">赢</div><div class="t" style="left:976px;top:501px;width:56px;height:25px;line-height:25px;color:#cc1515;">大</div><div class="t" style="left:6px;top:527px;width:80px;height:25px;line-height:25px;color:#ffffff;">德甲</div><div class="t" style="left:87px;top:527px;width:74px;height:25px;line-height:25px;color:#1e1e1e;">24-08-31</div><div class="t" style="left:162px;top:527px;width:108px;height:25px;line-height:25px;color:#2a7a22;">波鸿</div><div class="t" style="left:271px;top:527px;width:87px;height:25px;line-height:25px;color:#1e1e1e;"><span style="color:#cc1515">0-2</span>(0-0)</div><div class="t" style="left:359px;top:527px;width:37px;height:25px;line-height:25px;color:#1e1e1e;">3-4</div><div class="t" style="left:397px;top:527px;width:127px;height:25px;line-height:25px;color:#1e1e1e;">门兴格拉德巴赫</div><div class="t" style="left:525px;top:527px;width:47px;height:25px;line-height:25px;color:#1e1e1e;">0.85</div><div class="t" style="left:573px;top:527px;width:81px;height:25px;line-height:25px;color:#1e1e1e;">受平/半</div><div class="t" style="left:655px;top:527px;width:50px;height:25px;line-height:25px;color:#1e1e1e;">1.04</div><div class="t" style="left:706px;top:527px;width:59px;height:25px;line-height:25px;color:#1e1e1e;">2.78</div><div class="t" style="left:766px;top:527px;width:59px;height:25px;line-height:25px;color:#1e1e1e;">3.74</div><div class="t" style="left:826px;top:527px;width:74px;height:25px;line-height:25px;color:#1e1e1e;">2.34</div><div class="t" style="left:901px;top:527px;width:36px;height:25px;line-height:25px;color:#1010c4;">负</div><div class="t" style="left:938px;top:527px;width:37px;height:25px;line-height:25px;color:#1010b0;">输</div><div class="t" style="left:976px;top:527px;width:56px;height:25px;line-height:25px;color:#1010c4;">小</div><div class="t" style="left:6px;top:553px;width:80px;height:25px;line-height:25px;color:#ffffff;">德甲</div><div class="t" style="left:87px;top:553px;width:74px;height:25px;line-height:25px;color:#1e1e1e;">24-08-24</div><div class="t" style="left:162px;top:553px;width:108px;height:25px;line-height:25px;color:#1e1e1e;"><span class="rc">1</span>RB莱比锡</div><div class="t" style="left:271px;top:553px;width:87px;height:25px;line-height:25px;color:#1e1e1e;"><span style="color:#cc1515">1-0</span>(0-0)</div><div class="t" style="left:359px;top:553px;width:37px;height:25px;line-height:25px;color:#1e1e1e;">9-3</div><div class="t" style="left:397px;top:553px;width:127px;height:25px;line-height:25px;color:#2a7a22;">波鸿</div><div class="t" style="left:525px;top:553px;width:47px;height:25px;line-height:25px;color:#1e1e1e;">0.98</div><div class="t" style="left:573px;top:553px;width:81px;height:25px;line-height:25px;color:#1e1e1e;">两球</div><div class="t" style="left:655px;top:553px;width:50px;height:25px;line-height:25px;color:#1e1e1e;">0.91</div><div class="t" style="left:706px;top:553px;width:59px;height:25px;line-height:25px;color:#1e1e1e;">1.22</div><div class="t" style="left:766px;top:553px;width:59px;height:25px;line-height:25px;color:#1e1e1e;">6.84</div><div class="t" style="left:826px;top:553px;width:74px;height:25px;line-height:25px;color:#1e1e1e;">11.26</div><div class="t" style="left:901px;top:553px;width:36px;height:25px;line-height:25px;color:#1010c4;">负</div><div class="t" style="left:938px;top:553px;width:37px;height:25px;line-height:25px;color:#cc1515;">赢</div><div class="t" style="left:976px;top:553px;width:56px;height:25px;line-height:25px;color:#1010c4;">小</div><div class="t" style="left:6px;top:579px;width:80px;height:25px;line-height:25px;color:#ffffff;">德国杯</div><div class="t" style="left:87px;top:579px;width:74px;height:25px;line-height:25px;color:#1e1e1e;">24-08-18</div><div class="t" style="left:162px;top:579px;width:108px;height:25px;line-height:25px;color:#1e1e1e;">雷根斯堡</div><div class="t" style="left:271px;top:579px;width:87px;height:25px;line-height:25px;color:#1e1e1e;"><span style="color:#cc1515">1-0</span>(0-0)</div><div class="t" style="left:359px;top:579px;width:37px;height:25px;line-height:25px;color:#1e1e1e;">4-5</div><div class="t" style="left:397px;top:579px;width:127px;height:25px;line-height:25px;color:#2a7a22;">波鸿</div><div class="t" style="left:525px;top:579px;width:47px;height:25px;line-height:25px;color:#1e1e1e;">0.95</div><div class="t" style="left:573px;top:579px;width:81px;height:25px;line-height:25px;color:#1e1e1e;">受半球</div><div class="t" style="left:655px;top:579px;width:50px;height:25px;line-height:25px;color:#1e1e1e;">0.87</div><div class="t" style="left:706px;top:579px;width:59px;height:25px;line-height:25px;color:#1e1e1e;">3.66</div><div class="t" style="left:766px;top:579px;width:59px;height:25px;line-height:25px;color:#1e1e1e;">3.71</div><div class="t" style="left:826px;top:579px;width:74px;height:25px;line-height:25px;color:#1e1e1e;">1.86</div><div class="t" style="left:901px;top:579px;width:36px;height:25px;line-height:25px;color:#1010c4;">负</div><div class="t" style="left:938px;top:579px;width:37px;height:25px;line-height:25px;color:#1010b0;">输</div><div class="t" style="left:976px;top:579px;width:56px;height:25px;line-height:25px;color:#1010c4;">小</div><div class="t" style="left:6px;top:605px;width:80px;height:25px;line-height:25px;color:#ffffff;">球会友谊</div><div class="t" style="left:87px;top:605px;width:74px;height:25px;line-height:25px;color:#1e1e1e;">24-08-10</div><div class="t" style="left:162px;top:605px;width:108px;height:25px;line-height:25px;color:#1e1e1e;">勒阿弗尔</div><div class="t" style="left:271px;top:605px;width:87px;height:25px;line-height:25px;color:#1e1e1e;"><span style="color:#cc1515">0-6</span>(0-2)</div><div class="t" style="left:359px;top:605px;width:37px;height:25px;line-height:25px;color:#1e1e1e;">1-4</div><div class="t" style="left:397px;top:605px;width:127px;height:25px;line-height:25px;color:#2a7a22;">波鸿</div><div class="t" style="left:525px;top:605px;width:47px;height:25px;line-height:25px;color:#1e1e1e;">1.04</div><div class="t" style="left:573px;top:605px;width:81px;height:25px;line-height:25px;color:#1e1e1e;">平手</div><div class="t" style="left:655px;top:605px;width:50px;height:25px;line-height:25px;color:#1e1e1e;">0.78</div><div class="t" style="left:706px;top:605px;width:59px;height:25px;line-height:25px;color:#1e1e1e;">2.65</div><div class="t" style="left:766px;top:605px;width:59px;height:25px;line-height:25px;color:#1e1e1e;">3.36</div><div class="t" style="left:826px;top:605px;width:74px;height:25px;line-height:25px;color:#1e1e1e;">2.43</div><div class="t" style="left:901px;top:605px;width:36px;height:25px;line-height:25px;color:#cc1515;">胜</div><div class="t" style="left:938px;top:605px;width:37px;height:25px;line-height:25px;color:#cc1515;">赢</div><div class="t" style="left:976px;top:605px;width:56px;height:25px;line-height:25px;color:#cc1515;">大</div><div class="t" style="left:6px;top:631px;width:80px;height:25px;line-height:25px;color:#ffffff;">球会友谊</div><div class="t" style="left:87px;top:631px;width:74px;height:25px;line-height:25px;color:#1e1e1e;">24-07-30</div><div class="t" style="left:162px;top:631px;width:108px;height:25px;line-height:25px;color:#1e1e1e;">斯佩齐亚(中)</div><div class="t" style="left:271px;top:631px;width:87px;height:25px;line-height:25px;color:#1e1e1e;"><span style="color:#cc1515">3-1</span>(1-1)</div><div class="t" style="left:359px;top:631px;width:37px;height:25px;line-height:25px;color:#1e1e1e;">3-7</div><div class="t" style="left:397px;top:631px;width:127px;height:25px;line-height:25px;color:#2a7a22;">波鸿</div><div class="t" style="left:525px;top:631px;width:47px;height:25px;line-height:25px;color:#1e1e1e;">0.88</div><div class="t" style="left:573px;top:631px;width:81px;height:25px;line-height:25px;color:#1e1e1e;">受半球</div><div class="t" style="left:655px;top:631px;width:50px;height:25px;line-height:25px;color:#1e1e1e;">0.94</div><div class="t" style="left:706px;top:631px;width:59px;height:25px;line-height:25px;color:#1e1e1e;">3.74</div><div class="t" style="left:766px;top:631px;width:59px;height:25px;line-height:25px;color:#1e1e1e;">3.55</div><div class="t" style="left:826px;top:631px;width:74px;height:25px;line-height:25px;color:#1e1e1e;">1.83</div><div class="t" style="left:901px;top:631px;width:36px;height:25px;line-height:25px;color:#1010c4;">负</div><div class="t" style="left:938px;top:631px;width:37px;height:25px;line-height:25px;color:#1010b0;">输</div><div class="t" style="left:976px;top:631px;width:56px;height:25px;line-height:25px;color:#cc1515;">大</div><div class="t" style="left:6px;top:657px;width:80px;height:25px;line-height:25px;color:#ffffff;">球会友谊</div><div class="t" style="left:87px;top:657px;width:74px;height:25px;line-height:25px;color:#1e1e1e;">24-07-20</div><div class="t" style="left:162px;top:657px;width:108px;height:25px;line-height:25px;color:#1e1e1e;">马格德堡</div><div class="t" style="left:271px;top:657px;width:87px;height:25px;line-height:25px;color:#1e1e1e;"><span style="color:#cc1515">1-1</span>(1-1)</div><div class="t" style="left:359px;top:657px;width:37px;height:25px;line-height:25px;color:#1e1e1e;">2-4</div><div class="t" style="left:397px;top:657px;width:127px;height:25px;line-height:25px;color:#2a7a22;">波鸿</div><div class="t" style="left:525px;top:657px;width:47px;height:25px;line-height:25px;color:#1e1e1e;">0.92</div><div class="t" style="left:573px;top:657px;width:81px;height:25px;line-height:25px;color:#1e1e1e;">平手</div><div class="t" style="left:655px;top:657px;width:50px;height:25px;line-height:25px;color:#1e1e1e;">0.90</div><div class="t" style="left:706px;top:657px;width:59px;height:25px;line-height:25px;color:#1e1e1e;">2.51</div><div class="t" style="left:766px;top:657px;width:59px;height:25px;line-height:25px;color:#1e1e1e;">3.97</div><div class="t" style="left:826px;top:657px;width:74px;height:25px;line-height:25px;color:#1e1e1e;">2.24</div><div class="t" style="left:901px;top:657px;width:36px;height:25px;line-height:25px;color:#2a7a22;">平</div><div class="t" style="left:938px;top:657px;width:37px;height:25px;line-height:25px;color:#2a7a22;">走</div><div class="t" style="left:976px;top:657px;width:56px;height:25px;line-height:25px;color:#1010c4;">小</div><div class="t" style="left:6px;top:683px;width:80px;height:25px;line-height:25px;color:#ffffff;">球会友谊</div><div class="t" style="left:87px;top:683px;width:74px;height:25px;line-height:25px;color:#1e1e1e;">24-07-17</div><div class="t" style="left:162px;top:683px;width:108px;height:25px;line-height:25px;color:#1e1e1e;">费雷堡青年队</div><div class="t" style="left:271px;top:683px;width:87px;height:25px;line-height:25px;color:#1e1e1e;"><span style="color:#cc1515">1-0</span>(1-0)</div><div class="t" style="left:359px;top:683px;width:37px;height:25px;line-height:25px;color:#1e1e1e;">0-0</div><div class="t" style="left:397px;top:683px;width:127px;height:25px;line-height:25px;color:#2a7a22;">波鸿</div><div class="t" style="left:525px;top:683px;width:47px;height:25px;line-height:25px;color:#1e1e1e;"></div><div class="t" style="left:573px;top:683px;width:81px;height:25px;line-height:25px;color:#1e1e1e;"></div><div class="t" style="left:655px;top:683px;width:50px;height:25px;line-height:25px;color:#1e1e1e;"></div><div class="t" style="left:706px;top:683px;width:59px;height:25px;line-height:25px;color:#1e1e1e;"></div><div class="t" style="left:766px;top:683px;width:59px;height:25px;line-height:25px;color:#1e1e1e;"></div><div class="t" style="left:826px;top:683px;width:74px;height:25px;line-height:25px;color:#1e1e1e;"></div><div class="t" style="left:901px;top:683px;width:36px;height:25px;line-height:25px;color:#1010c4;">负</div><div class="t" style="left:938px;top:683px;width:37px;height:25px;line-height:25px;color:#1e1e1e;"></div><div class="t" style="left:976px;top:683px;width:56px;height:25px;line-height:25px;color:#1e1e1e;"></div><div class="t" style="left:5px;top:709px;width:1028px;height:25px;line-height:25px;color:#1e1e1e;letter-spacing:0.25px;">近<span style="color:#cc1515">10</span>场,胜2平2负6, 胜率:<span style="color:#cc1515">20%</span> 让胜率:<span style="color:#cc1515">33.3%</span> 大率:<span style="color:#cc1515">44.4%</span> 单率:<span style="color:#cc1515">40%</span></div>
</body></html>
